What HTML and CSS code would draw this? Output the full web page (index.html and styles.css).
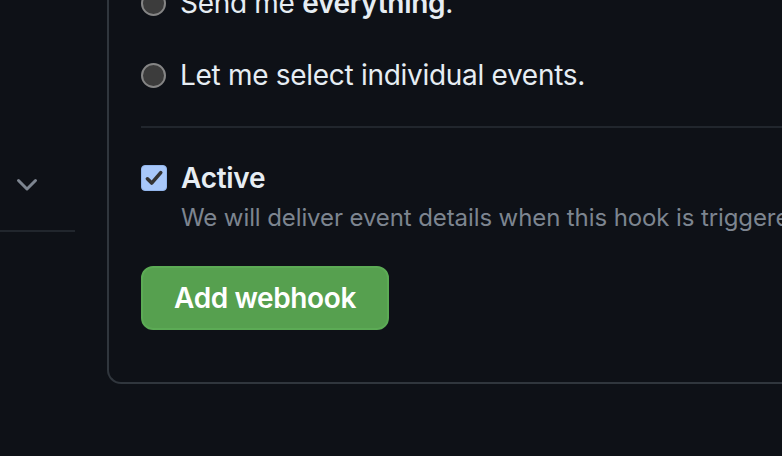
FILE: index.html
```html
<!DOCTYPE html>
<html lang="en">
<head>
<meta charset="utf-8">
<title>Add webhook</title>
<link rel="stylesheet" href="styles.css">
</head>
<body>
<div class="page">
  <aside class="sidebar">
    <div class="side-item">
      <svg class="chevron" viewBox="0 0 16 16" width="32" height="32" aria-hidden="true"><path d="M12.78 5.22a.749.749 0 0 1 0 1.06l-4.25 4.25a.749.749 0 0 1-1.06 0L3.22 6.28a.749.749 0 1 1 1.060-1.06L8 8.939l3.72-3.719a.749.749 0 0 1 1.06 0Z"/></svg>
    </div>
  </aside>
  <main class="card">
    <div class="options">
      <label class="option"><span class="radio"></span><span>Send me <b>everything</b>.</span></label>
      <label class="option"><span class="radio"></span><span>Let me select individual events.</span></label>
    </div>
    <hr class="divider">
    <div class="active">
      <label class="option bold"><span class="checkbox"><svg viewBox="0 0 16 16" width="22" height="22" aria-hidden="true"><path d="M3.2 8.6l3.1 3.1 6.6-7.6" fill="none" stroke="#333" stroke-width="2.6" stroke-linecap="round" stroke-linejoin="round"/></svg></span><span>Active</span></label>
      <p class="note">We will deliver event details when this hook is triggered.</p>
    </div>
    <button class="btn">Add webhook</button>
  </main>
</div>
</body>
</html>
```
FILE: styles.css
```css
html, body {
  margin: 0;
  padding: 0;
  background: #0e1117;
  overflow: hidden;
  height: 100%;
}
body {
  font-family: Inter, "Liberation Sans", sans-serif;
  color: #e6edf3;
}
.page {
  display: flex;
  gap: 32px;
  align-items: flex-start;
  width: 1200px;
}
.sidebar {
  width: 75px;
  flex: none;
  padding-top: 136px;
}
.side-item {
  height: 94px;
  border-bottom: 2px solid #21262d;
  display: flex;
  align-items: center;
  padding-left: 11px;
}
.chevron {
  fill: #7d8590;
  margin-top: 4px;
}
.card {
  flex: none;
  width: 900px;
  border-left: 2px solid #30363d;
  border-bottom: 2px solid #30363d;
  border-bottom-left-radius: 14px;
  padding: 0 0 52px 32px;
  margin-top: -17px;
  height: 401px;
  box-sizing: border-box;
}
.options {
  display: flex;
  flex-direction: column;
  gap: 32px;
}
.option {
  display: flex;
  align-items: center;
  gap: 14px;
  font-size: 28px;
  line-height: 40px;
  letter-spacing: -0.3px;
  white-space: nowrap;
}
.option b, .bold {
  font-weight: 600;
}
.radio {
  width: 25px;
  height: 25px;
  box-sizing: border-box;
  border-radius: 50%;
  background: #3c3c3c;
  border: 2px solid #858585;
  flex: none;
}
.divider {
  border: 0;
  height: 2px;
  background: #21262d;
  margin: 31px 0 30px;
}
.checkbox {
  width: 26px;
  height: 26px;
  box-sizing: border-box;
  border-radius: 4px;
  background: #a8c8fa;
  border: 1px solid #93b6ec;
  display: flex;
  align-items: center;
  justify-content: center;
  flex: none;
}
.note {
  margin: 2px 0 0 40px;
  font-size: 24px;
  line-height: 36px;
  letter-spacing: -0.1px;
  color: #7d8590;
  white-space: nowrap;
}
.btn {
  margin-top: 30px;
  width: 248px;
  height: 64px;
  padding: 0;
  border-radius: 12px;
  background: #56a04f;
  border: 2px solid #5cab55;
  color: #ffffff;
  font-family: inherit;
  font-size: 28px;
  font-weight: 600;
  letter-spacing: -0.4px;
}
```
